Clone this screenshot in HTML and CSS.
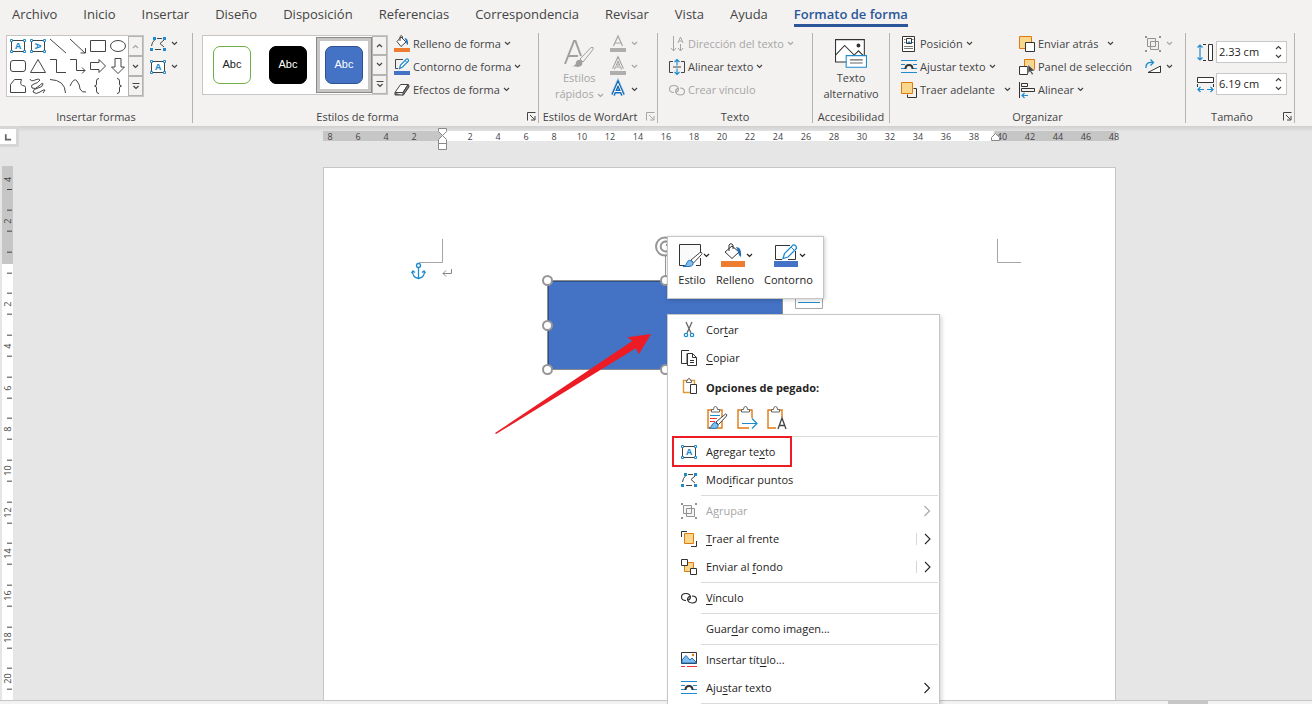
FILE: index.html
```html
<!DOCTYPE html>
<html lang="es">
<head>
<meta charset="utf-8">
<title>Formato de forma</title>
<link rel="stylesheet" href="styles.css">
</head>
<body>
<svg class="sprite" aria-hidden="true">
  <symbol id="chev" viewBox="0 0 7 5"><path d="M1 1l2.500 2.500L6 1" fill="none" stroke="currentColor" stroke-width="1.200"/></symbol>
  <symbol id="chev-up" viewBox="0 0 7 5"><path d="M1 4l2.500-2.500L6 4" fill="none" stroke="currentColor" stroke-width="1.200"/></symbol>
  <symbol id="more" viewBox="0 0 8 8"><path d="M.5 1.500h7M1.500 4L4 6.500 6.500 4" fill="none" stroke="currentColor" stroke-width="1.200"/></symbol>
  <symbol id="arrow-r" viewBox="0 0 8 12"><path d="M1.500 1l5 5-5 5" fill="none" stroke="currentColor" stroke-width="1.100"/></symbol>
  <symbol id="launch" viewBox="0 0 9 9"><path d="M.5 8.500v-8h8M3 3l4.500 4.500M8 4v4H4" fill="none" stroke="currentColor"/></symbol>
  <symbol id="textbox" viewBox="0 0 16 16"><path d="M1.500 2.500h13v11h-13z" fill="#fff" stroke="#444"/><g fill="#fff" stroke="#1e8bcd"><path d="M.5 1.500h2v2h-2zM13.500 1.500h2v2h-2zM.5 12.500h2v2h-2zM13.500 12.500h2v2h-2z"/></g><text x="8" y="11" text-anchor="middle" class="glyph-a">A</text></symbol>
  <symbol id="textbox-v" viewBox="0 0 16 16"><path d="M1.500 2.500h13v11h-13z" fill="#fff" stroke="#444"/><g fill="#fff" stroke="#1e8bcd"><path d="M.5 1.500h2v2h-2zM13.500 1.500h2v2h-2zM.5 12.500h2v2h-2zM13.500 12.500h2v2h-2z"/></g><text x="8" y="11" text-anchor="middle" class="glyph-a" transform="rotate(90 8 8)">A</text></symbol>
  <symbol id="points" viewBox="0 0 16 16"><path d="M1.500 10q.5-4 3-6M7 2.500h5M14 4l-4 3.500L14 11M5 13.500h6" fill="none" stroke="#444"/><path d="M3 1h3v3H3zM13 1h3v3h-3zM0 12h3v3H0zM13 12h3v3h-3z" fill="#1e8bcd"/></symbol>
  <symbol id="bucket" viewBox="0 1 16 16"><path d="M3 6.500L7 2l5 5-5 4.500z" fill="#fff" stroke="#444"/><path d="M6 6V1.500Q7-.5 8.500 1.500V4" fill="none" stroke="#444"/><path d="M10.500 3q4 0 3.500 7-2-1-2-4z" fill="#1e6fb8"/><path d="M0 13h16v4H0z" fill="#ed7d31"/></symbol>
  <symbol id="pen" viewBox="0 1 16 16"><path d="M9 1.500H1.500v9H4" fill="none" stroke="#444"/><path d="M5.500 10.500l1-3.500 6-6q2-.5 2 2l-6 6z" fill="#fff" stroke="#1e8bcd" stroke-width="1.200"/><path d="M11 2.500l2 2" stroke="#1e8bcd"/><path d="M0 13h16v4H0z" fill="#4472c4"/></symbol>
  <symbol id="effects" viewBox="0 0 16 16"><path d="M1 10.500L6.500 2.500H14L9 10.500z" fill="#fff" stroke="#444" stroke-linejoin="round"/><path d="M1 10.500V13h8v-2.500L14 2.500q1.500.5 1 2.500L9 13.500" fill="#777" stroke="#444" stroke-linejoin="round"/></symbol>
  <symbol id="quick" viewBox="0 0 32 30"><path d="M2 25L11 2h1.500L18 17M5 17h10" fill="none" stroke="#a0a0a0" stroke-width="2"/><path d="M17 20L28 8.500q3-1 2 2L20 23z" fill="#f3f2f1" stroke="#a0a0a0"/><path d="M9 27q4 0 4-4 2-4 6-1 2 5-4 6z" fill="#a0a0a0"/></symbol>
  <symbol id="a-fill" viewBox="0 1 16 16"><path d="M3.500 11L8 1l4.500 10M5 8h6" fill="none" stroke="#a6a6a6" stroke-width="1.200"/><path d="M0 13h16v4H0z" fill="#b0aeac"/></symbol>
  <symbol id="a-line" viewBox="0 1 16 16"><path d="M3.500 11L8 1l4.500 10M5 8h6" fill="none" stroke="#a0a0a0" stroke-width="3"/><path d="M3.500 11L8 1l4.500 10M5 8h6" fill="none" stroke="#f3f2f1"/><path d="M0 13h16v4H0z" fill="#b0aeac"/></symbol>
  <symbol id="a-glow" viewBox="0 1 16 16"><path d="M3 14L8 2.500 13 14M5 10.500h6" fill="none" stroke="#a9d3f2" stroke-width="5"/><path d="M3 14L8 2.500 13 14M5 10.500h6" fill="none" stroke="#1667b0" stroke-width="3.400"/><path d="M3 14L8 2.500 13 14M5 10.500h6" fill="none" stroke="#fff"/></symbol>
  <symbol id="direction" viewBox="0 0 16 16"><path d="M4.500 0v15M2 12l2.500 3L7 12M11.500 8v7M9 12l2.500 3 2.500-3M9 7l2.500-6L14 7M10 5h3" fill="none" stroke="#a6a6a6"/></symbol>
  <symbol id="align-t" viewBox="0 0 16 16"><path d="M4 2.500H.5v11H4M12 2.500h3.500v11H12M4 8h8" fill="none" stroke="#444"/><path d="M8 6.500v-6M5.500 3L8 .5 10.500 3M8 9.500v6M5.500 13L8 15.500l2.500-2.500" fill="none" stroke="#1e8bcd" stroke-width="1.200"/></symbol>
  <symbol id="link" viewBox="0 0 16 16"><path d="M5 10.500Q.5 10.500.5 7T5 3.500q4 0 4.500 3.500 0 2.500-3 3.500M11 6q4.500 0 4.500 3.500t-4.500 3.500q-4-.5-4.500-3.500 0-2.500 3-3.500" fill="none" stroke="currentColor" stroke-width="1.100"/></symbol>
  <symbol id="alt" viewBox="0 0 30 28"><path d="M.5.5h27v21H.5z" fill="#fff" stroke="#333"/><path d="M.5 15L9 6l9 9 4-4 5.500 5.500" fill="none" stroke="#333"/><circle cx="22" cy="6" r="1.800" fill="#333"/><path d="M10.500 15.500h19v11h-19z" fill="#fff" stroke="#1e8bcd"/><path d="M14 19.500h12M14 22.500h12" stroke="#666"/></symbol>
  <symbol id="position" viewBox="0 0 16 16"><path d="M1.500.5h12v15h-12z" fill="#fff" stroke="#333"/><path d="M3 3.500h1.500M3 6.500h1.500M11 3.500h1.500M11 6.500h1.500M3 10.500h9M3 12.500h9" stroke="#777"/><path d="M5.500 2.500h5v5h-5z" fill="#fff" stroke="#333"/><path d="M6 7l2-2 2 2z" fill="#1e8bcd"/></symbol>
  <symbol id="wrap" viewBox="0 0 16 16"><path d="M0 1.500h16M0 5.500h4M12 5.500h4M0 9.500h4M12 9.500h4M0 13.500h16" stroke="#1e8bcd" stroke-width="1.200"/><path d="M4.500 10q0-4 3.500-4t3.500 4" fill="none" stroke="#333" stroke-width="2"/></symbol>
  <symbol id="forward" viewBox="0 0 16 16"><path d="M12.500 6.500h3v9h-9v-3" fill="none" stroke="#333"/><path d="M.5.5h11v11H.5z" fill="#f9d78d" stroke="#e07a10"/></symbol>
  <symbol id="backward" viewBox="0 0 16 16"><path d="M.5.5h12v12H.5z" fill="#f9d78d" stroke="#e07a10"/><path d="M6.500 6.500h9v9h-9z" fill="#fff" stroke="#333"/></symbol>
  <symbol id="panel" viewBox="0 0 16 16"><path d="M5.500.5h10v10h-10z" fill="#f9d78d" stroke="#e07a10"/><path d="M.5 7.500h8v8h-8z" fill="#fff" stroke="#333"/><path d="M9 5.500v9l2-2 2 3.500 1.500-1-2-3H16z" fill="#444" stroke="#fff" stroke-width=".5"/></symbol>
  <symbol id="align" viewBox="0 0 16 16"><path d="M.5 0v16M2.500 1.500h6v3h-6zM2.500 6.500h13v3h-13z" fill="none" stroke="#333"/><path d="M3 13.500h6M5.500 11L3 13.500 5.500 16" fill="none" stroke="#1e8bcd" stroke-width="1.200"/></symbol>
  <symbol id="group" viewBox="0 0 16 16"><path d="M2.500 2.500h8v8h-8zM5.500 5.500h8v8h-8z" fill="#f0efee" fill-opacity=".6" stroke="#929292"/><path d="M0 0h2v2H0zM14 0h2v2h-2zM0 14h2v2H0zM14 14h2v2h-2z" fill="#929292"/></symbol>
  <symbol id="rotate" viewBox="0 0 16 16"><path d="M3 13.500L15.500 7v6.500z" fill="#fff" stroke="#333"/><path d="M1 9Q.5 2.500 8 3.500M5.500.5L8.500 3.500 5.500 6.500" fill="none" stroke="#1e8bcd" stroke-width="1.300"/></symbol>
  <symbol id="height" viewBox="0 0 17 17"><path d="M3 1v15M.5 3.500L3 1l2.500 2.500M.5 13.500L3 16l2.500-2.500" fill="none" stroke="#1e8bcd" stroke-width="1.200"/><path d="M6 .5h4M6 16.500h4" stroke="#333" stroke-dasharray="3 1"/><path d="M11.500.5h4v16h-4z" fill="#fff" stroke="#333"/></symbol>
  <symbol id="width" viewBox="0 0 17 17"><path d="M.5 1.500h16v5H.5z" fill="#fff" stroke="#333"/><path d="M.5 8v3M16.500 8v3" stroke="#333"/><path d="M1 13.500h6M10 13.500h6M3.500 11L1 13.500 3.500 16M13.500 11l2.500 2.500-2.500 2.500" fill="none" stroke="#1e8bcd" stroke-width="1.200"/></symbol>
  <symbol id="cut" viewBox="0 0 16 16"><path d="M5 0l5 11M11 0L6 11" fill="none" stroke="#666" stroke-width="1.300"/><circle cx="5" cy="13" r="1.700" fill="#fff" stroke="#1e8bcd" stroke-width="1.200"/><circle cx="11" cy="13" r="1.700" fill="#fff" stroke="#1e8bcd" stroke-width="1.200"/></symbol>
  <symbol id="copy" viewBox="0 0 16 16"><path d="M8 .5H.5v13H6V3.500" fill="none" stroke="#333"/><path d="M6.500 3.500h5l4 4v8h-9z" fill="#fff" stroke="#333"/><path d="M11.500 3.500v4h4M9 10.500h4M9 12.500h4" fill="none" stroke="#333"/></symbol>
  <symbol id="paste" viewBox="0 0 16 16"><path d="M2.500 2.500h11v12h-11z" fill="#fff" stroke="#e09a30" stroke-width="1.400"/><path d="M5.500 4.500v-2h1q0-2 1.500-2t1.500 2h1v2z" fill="#fff" stroke="#666"/><path d="M9.500 6.500h6v9h-6z" fill="#fff" stroke="#333"/></symbol>
  <symbol id="paste-f" viewBox="0 0 22 24"><path d="M2 4h14v18H2z" fill="#fff" stroke="#e07a10" stroke-width="1.400"/><path d="M5.500 6V3.500h2q0-3 2-3t2 3h2V6z" fill="#fff" stroke="#666"/><path d="M4 9.500h10" stroke="#1e8bcd"/><path d="M4 12.500h7M4 15.500h5" stroke="#e33"/><path d="M10 16l9.500-8q2 0 1 2l-8 8.500z" fill="#fff" stroke="#444"/><path d="M3 22q3-1 3.500-4 2-3 5 0 2 4-3 4.500z" fill="#83bdeb" stroke="#1e6fb8"/></symbol>
  <symbol id="paste-m" viewBox="0 0 22 24"><path d="M16 12V4H2v18h11" fill="#fff" stroke="#e07a10" stroke-width="1.400"/><path d="M5.500 6V3.500h2q0-3 2-3t2 3h2V6z" fill="#fff" stroke="#666"/><path d="M6 17.500h15M16 12.500l5 5-5 5" fill="none" stroke="#1e8bcd" stroke-width="1.200"/></symbol>
  <symbol id="paste-a" viewBox="0 0 22 24"><path d="M16 11V4H2v18h8" fill="#fff" stroke="#e07a10" stroke-width="1.400"/><path d="M5.500 6V3.500h2q0-3 2-3t2 3h2V6z" fill="#fff" stroke="#666"/><path d="M12 23l4-11 4 11M13.500 19.500h5" fill="none" stroke="#444" stroke-width="1.300"/></symbol>
  <symbol id="front" viewBox="0 0 16 16"><path d="M.5 6V.5H6M10 15.500h5.500V10" fill="none" stroke="#333"/><path d="M3.500 2.500h9v10h-9z" fill="#f9d78d" stroke="#e07a10"/></symbol>
  <symbol id="back" viewBox="0 0 16 16"><path d="M3.500 3.500h9v9h-9z" fill="#f9d78d" stroke="#e07a10"/><path d="M.5.5h6v6h-6zM9.500 9.500h6v6h-6z" fill="#fff" stroke="#333"/></symbol>
  <symbol id="caption" viewBox="0 0 16 16"><path d="M.5.500h15v11H.5z" fill="#fff" stroke="#333"/><path d="M1 8l4-4.500 4 4.500 2-2 4 4v1H1z" fill="#83bdeb" stroke="#1e6fb8"/><circle cx="12" cy="3" r="1.200" fill="#e07a10"/><path d="M0 14.500h4M6 14.500h10" stroke="#e33"/></symbol>
  <symbol id="style" viewBox="0 0 24 24"><path d="M22.500 9V1.500H1.500v21H7M22.500 15v7.500H18" fill="#fafafa" stroke="#333"/><path d="M13 17L22 9.500q3-.5 1.500 2L15.500 20z" fill="#fff" stroke="#444"/><path d="M5 23.500q4-1 4-4 2-4 6-.5 1 4-4 4.500z" fill="#83bdeb" stroke="#1e6fb8"/></symbol>
  <symbol id="fill-l" viewBox="0 0 24 24"><path d="M4 9L11 3l7 6-7 6.500z" fill="#fff" stroke="#333"/><path d="M8 8V2q2-3 4 0v4" fill="none" stroke="#333"/><path d="M15 4q6 0 5 10-3-2-3-6z" fill="#1e6fb8"/><path d="M0 18h24v6H0z" fill="#ed7d31"/></symbol>
  <symbol id="line-l" viewBox="0 0 24 24"><path d="M16 2.500H1.500v14H8M21.500 8v8.500H14" fill="#fff" stroke="#333"/><path d="M9 15.500l1.500-5L19 2q3.500-.5 3.500 3.500L14 14z" fill="#fff" stroke="#1e8bcd" stroke-width="1.300"/><path d="M17 4l3.500 3.500" stroke="#1e8bcd"/><path d="M0 18h24v6H0z" fill="#4472c4"/></symbol>
</svg>

<header class="ribbon">
  <nav class="tabs">
    <a href="#">Archivo</a><a href="#">Inicio</a><a href="#">Insertar</a><a href="#">Diseño</a><a href="#">Disposición</a><a href="#">Referencias</a><a href="#">Correspondencia</a><a href="#">Revisar</a><a href="#">Vista</a><a href="#">Ayuda</a><a href="#" class="active">Formato de forma</a>
  </nav>
  <div class="groups">
    <section class="group">
      <div class="content shapes-content">
        <div class="gallery">
          <div class="shapes">
            <button aria-label="Cuadro de texto"><svg class="i16"><use href="#textbox"/></svg></button>
            <button aria-label="Cuadro de texto vertical"><svg class="i16"><use href="#textbox-v"/></svg></button>
            <button aria-label="Línea"><svg class="i16 shp" viewBox="0 0 16 16"><path d="M0 1l16 14"/></svg></button>
            <button aria-label="Flecha"><svg class="i16 shp" viewBox="0 0 16 16"><path d="M0 1l15 14M15.500 10v5h-5"/></svg></button>
            <button aria-label="Rectángulo"><svg class="i16 shp" viewBox="0 0 16 16"><path d="M.5 2.500h15v11H.5z"/></svg></button>
            <button aria-label="Elipse"><svg class="i16 shp" viewBox="0 0 16 16"><ellipse cx="8" cy="8" rx="7.500" ry="5.500"/></svg></button>
            <button aria-label="Rectángulo redondeado"><svg class="i16 shp" viewBox="0 0 16 16"><rect x=".5" y="2.500" width="15" height="11" rx="2.500"/></svg></button>
            <button aria-label="Triángulo"><svg class="i16 shp" viewBox="0 0 16 16"><path d="M8 1.500L15.500 14.500H.5z"/></svg></button>
            <button aria-label="Conector"><svg class="i16 shp" viewBox="0 0 16 16"><path d="M0 1.500h6.500v13H16"/></svg></button>
            <button aria-label="Conector de flecha"><svg class="i16 shp" viewBox="0 0 16 16"><path d="M0 1.500h6.500v11H15M12 9.500l3 3-3 3"/></svg></button>
            <button aria-label="Flecha derecha"><svg class="i16 shp" viewBox="0 0 16 16"><path d="M.5 4.500H9v-3l6.500 6.500L9 14.500v-3H.5z"/></svg></button>
            <button aria-label="Flecha abajo"><svg class="i16 shp" viewBox="0 0 16 16"><path d="M5 .5h6V9h3.500L8 15.500 1.500 9H5z"/></svg></button>
            <button aria-label="Forma libre"><svg class="i16 shp" viewBox="0 0 16 16"><path d="M.5 14.500v-8l4-5h7q-2 5 1 6 3 0 3 2v5z"/></svg></button>
            <button aria-label="A mano alzada"><svg class="i16 shp" viewBox="0 0 16 16"><path d="M0 1q1 3 5 1t5 0Q8 5 4 6T2 10q3 2 7-2t4-2q0 3-5 4t-5 4q3 3 7 0t5-2l-2 3"/></svg></button>
            <button aria-label="Arco"><svg class="i16 shp" viewBox="0 0 16 16"><path d="M0 1.500Q15 2 15.500 15"/></svg></button>
            <button aria-label="Curva"><svg class="i16 shp" viewBox="0 0 16 16"><path d="M0 8q4-9 7-5t3 8q2 4 6 3"/></svg></button>
            <button aria-label="Llave izquierda"><svg class="i16 shp" viewBox="0 0 16 16"><path d="M9 .5Q6.500.5 6.500 3v3q0 2-2 2 2 0 2 2v3q0 2.500 2.500 2.500"/></svg></button>
            <button aria-label="Llave derecha"><svg class="i16 shp" viewBox="0 0 16 16"><path d="M7 .5Q9.500.5 9.500 3v3q0 2 2 2-2 0-2 2v3q0 2.500-2.500 2.500"/></svg></button>
          </div>
          <div class="scroller">
            <button class="off" aria-label="Subir"><svg class="chev"><use href="#chev-up"/></svg></button>
            <button aria-label="Bajar"><svg class="chev"><use href="#chev"/></svg></button>
            <button aria-label="Más"><svg class="i8"><use href="#more"/></svg></button>
          </div>
        </div>
        <div class="rows">
          <button class="cmd bare" aria-label="Editar forma"><svg class="i16"><use href="#points"/></svg><svg class="chev"><use href="#chev"/></svg></button>
          <button class="cmd bare" aria-label="Dibujar cuadro de texto"><svg class="i16"><use href="#textbox"/></svg><svg class="chev"><use href="#chev"/></svg></button>
        </div>
      </div>
      <h2>Insertar formas</h2>
    </section>

    <section class="group">
      <div class="content styles-content">
        <div class="gallery">
          <button class="swatch"><span class="chip outline">Abc</span></button>
          <button class="swatch"><span class="chip dark">Abc</span></button>
          <button class="swatch selected"><span class="chip blue">Abc</span></button>
          <div class="scroller">
            <button aria-label="Subir"><svg class="chev"><use href="#chev-up"/></svg></button>
            <button aria-label="Bajar"><svg class="chev"><use href="#chev"/></svg></button>
            <button aria-label="Más"><svg class="i8"><use href="#more"/></svg></button>
          </div>
        </div>
        <div class="rows">
          <button class="cmd"><svg class="i16"><use href="#bucket"/></svg>Relleno de forma<svg class="chev"><use href="#chev"/></svg></button>
          <button class="cmd"><svg class="i16"><use href="#pen"/></svg>Contorno de forma<svg class="chev"><use href="#chev"/></svg></button>
          <button class="cmd"><svg class="i16"><use href="#effects"/></svg>Efectos de forma<svg class="chev"><use href="#chev"/></svg></button>
        </div>
      </div>
      <h2 class="lean">Estilos de forma</h2>
      <button class="launcher" aria-label="Más opciones de estilo"><svg class="i9"><use href="#launch"/></svg></button>
    </section>

    <section class="group">
      <div class="content wordart-content">
        <button class="big off"><svg class="i32"><use href="#quick"/></svg><span>Estilos<br>rápidos <svg class="chev"><use href="#chev"/></svg></span></button>
        <div class="rows">
          <button class="cmd bare off" aria-label="Relleno de texto"><svg class="i16"><use href="#a-fill"/></svg><svg class="chev"><use href="#chev"/></svg></button>
          <button class="cmd bare off" aria-label="Contorno de texto"><svg class="i16"><use href="#a-line"/></svg><svg class="chev"><use href="#chev"/></svg></button>
          <button class="cmd bare" aria-label="Efectos de texto"><svg class="i16"><use href="#a-glow"/></svg><svg class="chev"><use href="#chev"/></svg></button>
        </div>
      </div>
      <h2 class="lean">Estilos de WordArt</h2>
      <button class="launcher off" aria-label="Más opciones de WordArt"><svg class="i9"><use href="#launch"/></svg></button>
    </section>

    <section class="group">
      <div class="content text-content">
        <div class="rows">
          <button class="cmd off"><svg class="i16"><use href="#direction"/></svg>Dirección del texto<svg class="chev"><use href="#chev"/></svg></button>
          <button class="cmd"><svg class="i16"><use href="#align-t"/></svg>Alinear texto<svg class="chev"><use href="#chev"/></svg></button>
          <button class="cmd off"><svg class="i16"><use href="#link"/></svg>Crear vínculo</button>
        </div>
      </div>
      <h2>Texto</h2>
    </section>

    <section class="group">
      <div class="content alt-content">
        <button class="big"><svg class="i32"><use href="#alt"/></svg><span>Texto<br>alternativo</span></button>
      </div>
      <h2>Accesibilidad</h2>
    </section>

    <section class="group">
      <div class="content arrange-content">
        <div class="rows">
          <button class="cmd"><svg class="i16"><use href="#position"/></svg>Posición<svg class="chev"><use href="#chev"/></svg></button>
          <button class="cmd"><svg class="i16"><use href="#wrap"/></svg>Ajustar texto<svg class="chev"><use href="#chev"/></svg></button>
          <button class="cmd split"><svg class="i16"><use href="#forward"/></svg>Traer adelante<svg class="chev"><use href="#chev"/></svg></button>
        </div>
        <div class="rows">
          <button class="cmd split"><svg class="i16"><use href="#backward"/></svg>Enviar atrás<svg class="chev"><use href="#chev"/></svg></button>
          <button class="cmd"><svg class="i16"><use href="#panel"/></svg>Panel de selección</button>
          <button class="cmd"><svg class="i16"><use href="#align"/></svg>Alinear<svg class="chev"><use href="#chev"/></svg></button>
        </div>
        <div class="rows">
          <button class="cmd bare off" aria-label="Agrupar"><svg class="i16"><use href="#group"/></svg><svg class="chev"><use href="#chev"/></svg></button>
          <button class="cmd bare" aria-label="Girar"><svg class="i16"><use href="#rotate"/></svg><svg class="chev"><use href="#chev"/></svg></button>
        </div>
      </div>
      <h2>Organizar</h2>
    </section>

    <section class="group">
      <div class="content size-content">
        <div class="size"><svg class="i17"><use href="#height"/></svg><div class="spin"><input aria-label="Alto de forma" value="2.33 cm"><span class="steps"><svg class="chev"><use href="#chev-up"/></svg><svg class="chev"><use href="#chev"/></svg></span></div></div>
        <div class="size"><svg class="i17"><use href="#width"/></svg><div class="spin"><input aria-label="Ancho de forma" value="6.19 cm"><span class="steps"><svg class="chev"><use href="#chev-up"/></svg><svg class="chev"><use href="#chev"/></svg></span></div></div>
      </div>
      <h2 class="lean">Tamaño</h2>
      <button class="launcher" aria-label="Más opciones de tamaño"><svg class="i9"><use href="#launch"/></svg></button>
    </section>
  </div>
</header>

<main class="workspace">
  <div class="tab-stop"><svg class="i17" viewBox="0 0 17 17"><path d="M6 6v6h6" fill="none" stroke="#666" stroke-width="2"/></svg></div>
  <div class="h-ruler">
    <div class="numbers"><span>8</span><span>6</span><span>4</span><span>2</span><span></span><span>2</span><span>4</span><span>6</span><span>8</span><span>10</span><span>12</span><span>14</span><span>16</span><span>18</span><span>20</span><span>22</span><span>24</span><span>26</span><span>28</span><span>30</span><span>32</span><span>34</span><span>36</span><span>38</span><span>40</span><span>42</span><span>44</span><span>46</span><span>48</span></div>
    <svg class="indent indent-left" viewBox="0 0 9 22"><path d="M.5.500h8v3l-4 4 4 4v10h-8v-10l4-4-4-4zM.5 15.500h8" fill="#fff" stroke="#888"/></svg>
    <svg class="indent indent-right" viewBox="0 0 9 22"><path d="M.5 15.500v-3l4-4 4 4v3z" fill="#fff" stroke="#888"/></svg>
  </div>
  <div class="v-ruler">
    <span class="first">4</span><span>2</span><span></span><span>2</span><span>4</span><span>6</span><span>8</span><span>10</span><span>12</span><span>14</span><span>16</span><span>18</span><span>20</span>
  </div>
  <article class="page">
    <svg class="drawing" viewBox="324 168 791 532">
      <path d="M442.500 239v23.500H419M997.500 239v23.500H1021" fill="none" stroke="#a6a6a6"/>
      <g fill="none" stroke="#1e8bcd" stroke-width="1.300"><circle cx="418.500" cy="265.500" r="2"/><path d="M418.500 267.500V278M412.500 271q0 6.500 6 7.500 6-1 6-7.500M411.500 273l1.500-2 2 1.500M425.500 273l-1.500-2-2 1.500"/></g>
      <path d="M451.500 269v4.500H443M446 270.500l-3 3 3 3" fill="none" stroke="#888"/>
      <path d="M547.500 280.500h235v89h-235z" fill="#4472c4" stroke="#8c8c8c"/>
      <path d="M548.500 369V281.500H782" fill="none" stroke="#2f528f"/>
      <path d="M665.500 255v21" stroke="#999"/>
      <g fill="#fff" stroke="#969696" stroke-width="2"><circle cx="665" cy="246.500" r="9"/><path d="M670 244a5 5 0 1 0 0 5M666 245h4v-4" fill="none"/><circle cx="547.500" cy="280.500" r="4.500"/><circle cx="547.500" cy="325.500" r="4.500"/><circle cx="547.500" cy="369.500" r="4.500"/><circle cx="665.500" cy="280.500" r="4.500"/><circle cx="665.500" cy="369.500" r="4.500"/></g>
      <path d="M795.500 285.500h27v23h-27z" fill="#fff" stroke="#a6a6a6"/><path d="M798 302.500h22" stroke="#1e8bcd"/>
      <path d="M495 433L632.300 341l-5-3.700L651 334l-12 20-3.300-5.700L496 434z" fill="#ed1c24"/>
    </svg>

    <div class="mini-toolbar">
      <button><span class="pic"><svg class="i24"><use href="#style"/></svg><svg class="chev"><use href="#chev"/></svg></span>Estilo</button>
      <button><span class="pic"><svg class="i24"><use href="#fill-l"/></svg><svg class="chev"><use href="#chev"/></svg></span>Relleno</button>
      <button><span class="pic"><svg class="i24"><use href="#line-l"/></svg><svg class="chev"><use href="#chev"/></svg></span>Contorno</button>
    </div>

    <div class="menu">
      <button class="item"><svg class="i16"><use href="#cut"/></svg><span>Cor<u>t</u>ar</span></button>
      <button class="item"><svg class="i16"><use href="#copy"/></svg><span><u>C</u>opiar</span></button>
      <div class="item heading"><svg class="i16"><use href="#paste"/></svg><span>Opciones de pegado:</span></div>
      <div class="paste-row">
        <button aria-label="Mantener formato de origen"><svg class="i22"><use href="#paste-f"/></svg></button>
        <button aria-label="Combinar formato"><svg class="i22"><use href="#paste-m"/></svg></button>
        <button aria-label="Mantener solo texto"><svg class="i22"><use href="#paste-a"/></svg></button>
      </div>
      <hr>
      <button class="item marked"><svg class="i16"><use href="#textbox"/></svg><span>Agregar te<u>x</u>to</span></button>
      <button class="item"><svg class="i16"><use href="#points"/></svg><span>Mod<u>i</u>ficar puntos</span></button>
      <hr>
      <button class="item off"><svg class="i16"><use href="#group"/></svg><span>A<u>g</u>rupar</span><svg class="sub"><use href="#arrow-r"/></svg></button>
      <button class="item"><svg class="i16"><use href="#front"/></svg><span><u>T</u>raer al frente</span><svg class="sub bar"><use href="#arrow-r"/></svg></button>
      <button class="item"><svg class="i16"><use href="#back"/></svg><span>Enviar al <u>f</u>ondo</span><svg class="sub bar"><use href="#arrow-r"/></svg></button>
      <hr>
      <button class="item"><svg class="i16"><use href="#link"/></svg><span><u>V</u>ínculo</span></button>
      <hr>
      <button class="item"><svg class="i16"></svg><span>Guar<u>d</u>ar como imagen...</span></button>
      <hr>
      <button class="item"><svg class="i16"><use href="#caption"/></svg><span>Insertar tít<u>u</u>lo...</span></button>
      <button class="item"><svg class="i16"><use href="#wrap"/></svg><span>Aju<u>s</u>tar texto</span><svg class="sub"><use href="#arrow-r"/></svg></button>
      <hr>
    </div>
  </article>
</main>
<footer class="bottom"><div class="thumb"></div></footer>
</body>
</html>
```

FILE: styles.css
```css
*, *::after { box-sizing: border-box; }
html, body { height: 100%; }
body {
  margin: 0;
  display: flex;
  flex-direction: column;
  overflow: hidden;
  font: 11px/16px "Open Sans", "Noto Sans", sans-serif;
  color: #444;
  background: #e6e6e6;
}
button {
  margin: 0;
  padding: 0;
  border: 0;
  background: none;
  font: inherit;
  color: inherit;
  text-align: left;
}
svg { display: block; flex: none; overflow: visible; }
symbol { overflow: visible; }
.sprite { display: none; }
.glyph-a { font: bold 9px "Open Sans", sans-serif; fill: #1e8bcd; }
.i8 { width: 8px; height: 8px; }
.i9 { width: 9px; height: 9px; }
.i16 { width: 16px; height: 16px; }
.i17 { width: 17px; height: 17px; }
.i22 { width: 22px; height: 24px; }
.i24 { width: 24px; height: 24px; }
.i32 { width: 32px; height: 30px; }
.chev { width: 7px; height: 5px; }
.shp { fill: none; stroke: #444; }
.off { color: #a6a6a6; }

/* Ribbon */
.ribbon { background: #f3f2f1; height: 126px; flex: none; }
.tabs {
  display: flex;
  gap: 26px;
  padding: 5px 12px 0;
  height: 33px;
  font-size: 13px;
  line-height: 18px;
}
.tabs a { color: #444; text-decoration: none; height: 22px; }
.tabs .active { color: #2b579a; font-weight: 600; border-bottom: 3px solid #2b579a; }
.groups {
  display: grid;
  grid-template-columns: 193fr 346fr 119fr 155fr 77fr 296fr 109fr 17fr;
  height: 90px;
}
.group {
  position: relative;
  min-width: 0;
  border-right: 1px solid #b5b3b1;
  display: flex;
  flex-direction: column;
}
.content { display: flex; height: 78px; white-space: nowrap; }
.group h2 { margin: 0; font: inherit; line-height: 12px; text-align: center; white-space: nowrap; }
.group h2.lean { padding-right: 16px; }
.launcher { position: absolute; right: 2px; bottom: 2px; }
.rows { display: flex; flex-direction: column; margin-top: -1px; }
.cmd { display: flex; align-items: center; gap: 3px; height: 23px; }
.cmd.bare { gap: 5px; }
.cmd.split .chev { margin-left: 6px; }
.big { display: flex; flex-direction: column; align-items: center; text-align: center; }
.big span .chev { display: inline-block; vertical-align: middle; }
.gallery { display: flex; background: #fff; border: 1px solid #c8c6c4; }
.scroller { display: flex; flex-direction: column; width: 15px; }
.scroller button {
  flex: 1;
  display: flex;
  align-items: center;
  justify-content: center;
  border: 1px solid #b5b3b1;
  background: #f3f2f1;
}
.shapes-content { padding: 0 6px; gap: 6px; }
.shapes-content .gallery { width: 138px; height: 62px; margin-top: 2px; }
.shapes { flex: 1; display: grid; grid-template-columns: repeat(6, 20px); }
.shapes button { display: flex; align-items: center; padding-left: 3px; }
.styles-content { padding: 0 9px; gap: 6px; }
.styles-content .gallery { width: 186px; height: 60px; margin-top: 2px; padding-left: 1px; }
.swatch { flex: 1; display: flex; align-items: center; justify-content: center; margin: 1px 0; border: 1px solid transparent; }
.swatch.selected { border: 1px solid #8a8886; box-shadow: inset 0 0 0 3px #c8c6c4; }
.chip { width: 38px; height: 38px; border-radius: 7px; border: 1px solid; text-align: center; font: 11px/34px "Liberation Sans", Arial, sans-serif; }
.outline { border-color: #70ad47; color: #222; }
.dark { background: #000; border-color: #000; color: #fff; }
.blue { background: #4472c4; border-color: #2f528f; color: #fff; }
.wordart-content { padding: 0 16px; gap: 6px; }
.big { padding-top: 6px; }
.big span { padding-top: 1px; }
.text-content { padding: 0 11px; }
.alt-content { justify-content: center; }
.arrange-content { padding: 0 11px; display: grid; grid-template-columns: 118px 126px 1fr; }
.size-content { flex-direction: column; gap: 10px; padding: 8px 7px 0 11px; }
.size { display: flex; align-items: center; gap: 2px; }
.spin { flex: 1; min-width: 0; display: flex; height: 22px; border: 1px solid #c8c6c4; background: #fff; }
.spin input { flex: 1; min-width: 0; border: 0; padding: 0 2px; font: inherit; color: #252423; background: none; outline: 0; }
.steps { display: flex; flex-direction: column; justify-content: space-between; padding: 3px 4px 3px 0; }

/* Document area */
.workspace {
  flex: 1;
  min-height: 0;
  display: grid;
  grid-template-columns: 323fr 793px 196fr;
  grid-template-rows: 41px 1fr;
  background: linear-gradient(#cfcfcf, #e6e6e6 6px);
}
.tab-stop { width: 19px; height: 21px; padding: 3px 3px 3px 0; background: #d6d6d6; }
.tab-stop svg { background: #fff; width: 16px; height: 15px; }
.h-ruler {
  position: relative;
  height: 10px;
  margin-top: 5px;
  background: linear-gradient(90deg, #c6c6c6 119px, #fff 119px, #fff 670px, #c6c6c6 672px);
}
.numbers { display: flex; margin: 0 -12px 0 -7px; font-size: 9px; line-height: 11px; }
.numbers span { flex: 0 0 28px; text-align: center; }
.indent { position: absolute; width: 9px; height: 22px; top: -3px; }
.indent-left { left: 115px; }
.indent-right { left: 668px; top: -6px; }
.v-ruler {
  grid-row: 2;
  grid-column: 1;
  width: 11px;
  margin: -1px 0 0 2px;
  display: flex;
  flex-direction: column;
  font-size: 9px;
  line-height: 11px;
  background: linear-gradient(#c6c6c6 98px, #fff 98px);
}
.v-ruler span {
  flex: 1;
  min-height: 0;
  writing-mode: vertical-rl;
  transform: rotate(180deg);
  text-align: center;
  width: 11px;
  background:
    linear-gradient(#444, #444) 1px 25% / 5px 1px no-repeat,
    linear-gradient(#444, #444) 1px 75% / 5px 1px no-repeat;
}
.v-ruler .first {
  flex: 0 0 34px;
  padding-top: 8px;
  background: linear-gradient(#444, #444) 1px 10px / 5px 1px no-repeat;
}
.page {
  grid-row: 2;
  grid-column: 2;
  position: relative;
  min-height: 0;
  background: #fff;
  border: 1px solid #c6c6c6;
  border-bottom: 0;
}
.drawing { width: 791px; height: 532px; }
.mini-toolbar {
  position: absolute;
  left: 343px;
  top: 68px;
  width: 157px;
  height: 63px;
  padding: 6px 8px 0 10px;
  display: flex;
  gap: 10px;
  background: #fff;
  border: 1px solid #c6c6c6;
  box-shadow: 1px 1px 4px rgba(0, 0, 0, .2);
  color: #252423;
}
.mini-toolbar button { display: flex; flex-direction: column; gap: 5px; align-items: center; }
.mini-toolbar .pic { display: flex; align-items: center; gap: 1px; margin: 0 -4px 0 0; }
.menu {
  position: absolute;
  z-index: 2;
  left: 343px;
  top: 146px;
  width: 273px;
  padding: 1px 1px 20px 0;
  background: #fff;
  border: 1px solid #c6c6c6;
  box-shadow: 2px 2px 4px rgba(0, 0, 0, .15);
  color: #252423;
}
.item { position: relative; display: flex; align-items: center; gap: 9px; width: 100%; height: 28px; padding: 0 0 0 13px; }
.item span { flex: 1; }
.item u { text-underline-offset: 2px; }
.item.off { color: #a6a6a6; }
.heading { height: 32px; font-weight: 700; }
.heading svg { align-self: flex-start; margin-top: 6px; }
.sub { width: 22px; height: 12px; }
.sub.bar { border-left: 1px solid #d6d6d6; }
.marked::after { content: ""; position: absolute; left: 4px; top: -2px; width: 120px; height: 31px; border: 2px solid #ed1c24; }
.paste-row { display: flex; align-items: flex-start; gap: 8px; height: 31px; padding: 2px 0 0 38px; }
.menu hr { margin: 1px 0 1px 33px; border: 0; height: 1px; background: #dadada; }
.bottom { flex: none; height: 4px; border-top: 1px solid #c6c6c6; background: #f3f2f1; padding-left: 89%; }
.thumb { width: 40px; height: 3px; background: #c6c6c6; }
```
